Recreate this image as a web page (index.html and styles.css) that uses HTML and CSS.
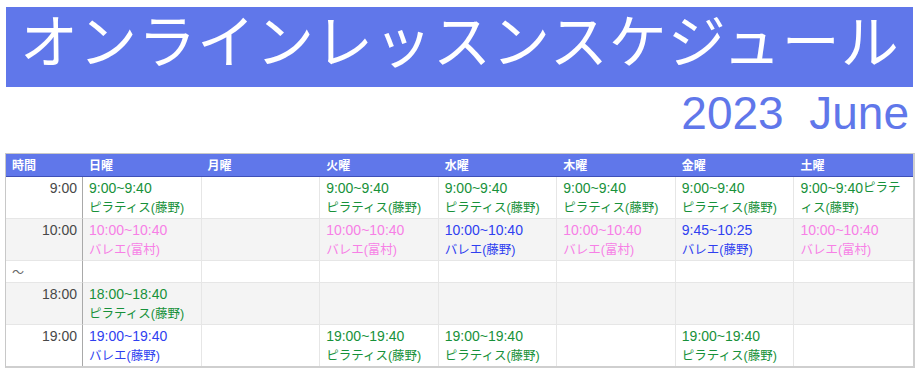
FILE: index.html
```html
<!DOCTYPE html>
<html lang="ja">
<head>
<meta charset="utf-8">
<title>オンラインレッスンスケジュール</title>
<link rel="stylesheet" href="styles.css">
</head>
<body>
<div class="page">
  <h1 class="band">オンラインレッスンスケジュール</h1>
  <div class="month">2023&nbsp;&nbsp;June</div>
  <table class="sched">
    <thead>
      <tr>
        <th class="tcol">時間</th>
        <th>日曜</th><th>月曜</th><th>火曜</th><th>水曜</th><th>木曜</th><th>金曜</th><th>土曜</th>
      </tr>
    </thead>
    <tbody>
      <tr>
        <td class="time">9:00</td>
        <td class="pil"><span class="tm">9:00~9:40</span><br>ピラティス(藤野)</td>
        <td></td>
        <td class="pil"><span class="tm">9:00~9:40</span><br>ピラティス(藤野)</td>
        <td class="pil"><span class="tm">9:00~9:40</span><br>ピラティス(藤野)</td>
        <td class="pil"><span class="tm">9:00~9:40</span><br>ピラティス(藤野)</td>
        <td class="pil"><span class="tm">9:00~9:40</span><br>ピラティス(藤野)</td>
        <td class="pil"><span class="tm">9:00~9:40</span>ピラテ<br>ィス(藤野)</td>
      </tr>
      <tr class="alt">
        <td class="time">10:00</td>
        <td class="bal-t"><span class="tm">10:00~10:40</span><br>バレエ(富村)</td>
        <td></td>
        <td class="bal-t"><span class="tm">10:00~10:40</span><br>バレエ(富村)</td>
        <td class="bal-f"><span class="tm">10:00~10:40</span><br>バレエ(藤野)</td>
        <td class="bal-t"><span class="tm">10:00~10:40</span><br>バレエ(富村)</td>
        <td class="bal-f"><span class="tm">9:45~10:25</span><br>バレエ(藤野)</td>
        <td class="bal-t"><span class="tm">10:00~10:40</span><br>バレエ(富村)</td>
      </tr>
      <tr>
        <td class="time gap">〜</td>
        <td></td><td></td><td></td><td></td><td></td><td></td><td></td>
      </tr>
      <tr class="alt">
        <td class="time">18:00</td>
        <td class="pil"><span class="tm">18:00~18:40</span><br>ピラティス(藤野)</td>
        <td></td><td></td><td></td><td></td><td></td><td></td>
      </tr>
      <tr class="last">
        <td class="time">19:00</td>
        <td class="bal-f"><span class="tm">19:00~19:40</span><br>バレエ(藤野)</td>
        <td></td>
        <td class="pil"><span class="tm">19:00~19:40</span><br>ピラティス(藤野)</td>
        <td class="pil"><span class="tm">19:00~19:40</span><br>ピラティス(藤野)</td>
        <td></td>
        <td class="pil"><span class="tm">19:00~19:40</span><br>ピラティス(藤野)</td>
        <td></td>
      </tr>
    </tbody>
  </table>
</div>
</body>
</html>
```

FILE: styles.css
```css
html, body {
  margin: 0;
  padding: 0;
  background: #ffffff;
}

.page {
  padding: 7px 6px 0 6px;
  font-family: "Liberation Sans", "Noto Sans CJK JP", sans-serif;
}

.band {
  margin: 0 2px 0 0;
  height: 80px;
  box-sizing: border-box;
  padding: 0 0 17px 14px;
  background: #6077ea;
  color: #ffffff;
  font-family: "Noto Sans CJK JP", sans-serif;
  font-weight: 400;
  font-size: 58px;
  line-height: 63px;
  letter-spacing: 1px;
  white-space: nowrap;
}

.month {
  margin: 3px 0 17px 0;
  padding-right: 6px;
  text-align: right;
  color: #6077ea;
  font-size: 46px;
  line-height: 46px;
}

.sched {
  width: 910px;
  margin: 0 0 0 -1px;
  table-layout: fixed;
  border-collapse: separate;
  border-spacing: 0;
  border-top: 1px solid #c8c8c8;
  border-left: 1px solid #c8c8c8;
  border-right: 2px solid #cfcfcf;
  border-bottom: 2px solid #cfcfcf;
  font-size: 12.5px;
}

.sched th {
  background: #6077ea;
  color: #ffffff;
  font-family: "Noto Sans CJK JP", sans-serif;
  font-weight: 700;
  font-size: 12px;
  line-height: 22px;
  text-align: left;
  padding: 0 6px;
  border-bottom: 1px solid #3f50b8;
}

.sched th.tcol {
  width: 77px;
  box-sizing: border-box;
}

.sched td {
  vertical-align: top;
  padding: 1px 6px 0 6px;
  line-height: 20px;
  border-right: 1px solid #e6e6e6;
  border-bottom: 1px solid #e6e6e6;
  white-space: nowrap;
}

.sched td:last-child {
  border-right: none;
}

.sched tr.last td {
  border-bottom: none;
}

.sched tr.alt td {
  background: #f4f4f4;
}

.tm {
  font-size: 14px;
  vertical-align: top;
}

.sched td.time {
  text-align: right;
  padding-right: 5px;
  color: #484848;
  font-size: 14px;
  border-right: 1px solid #a9a9a9;
}

.sched td.gap {
  text-align: left;
  color: #666666;
  font-family: "Noto Sans CJK JP", sans-serif;
  font-size: 12px;
}

.pil {
  color: #17913a;
}

.bal-t {
  color: #f77fe6;
}

.bal-f {
  color: #2f3ff0;
}
```
